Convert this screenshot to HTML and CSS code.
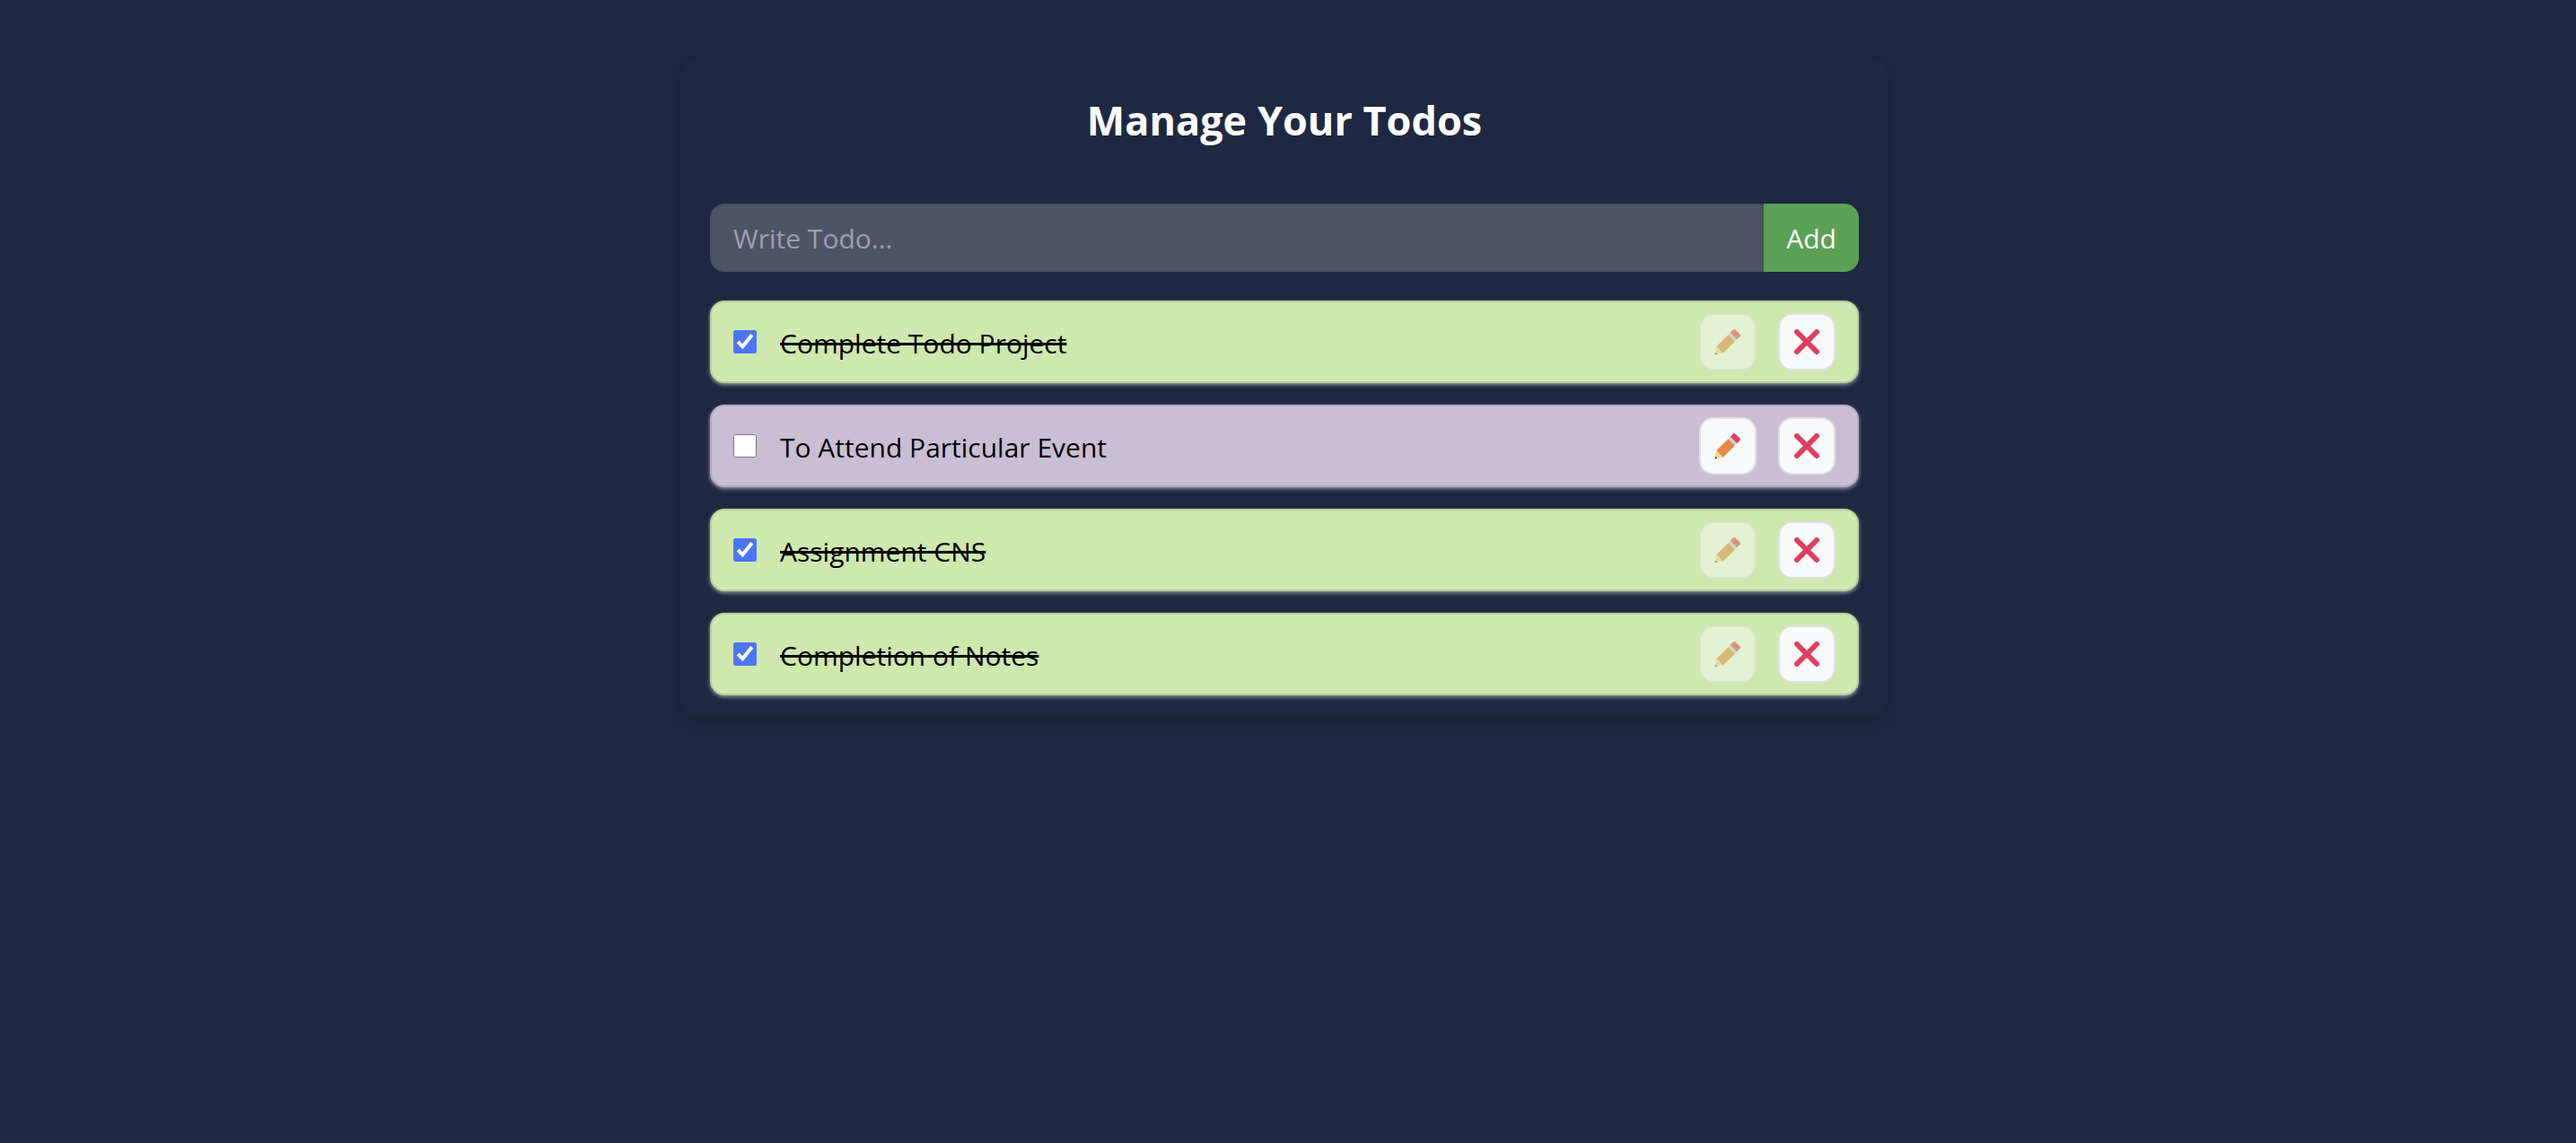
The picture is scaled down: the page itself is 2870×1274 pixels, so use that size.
FILE: index.html
```html
<!DOCTYPE html>
<html lang="en">
<head>
<meta charset="utf-8">
<meta name="viewport" content="width=device-width, initial-scale=1">
<title>Manage Your Todos</title>
<link rel="stylesheet" href="styles.css">
</head>
<body>
<svg class="sprite" aria-hidden="true">
  <symbol id="pencil" viewBox="2 0 34 34">
    <g transform="rotate(45 18 18)">
      <path fill="#dd4160" d="M14 -1 h8 a2 2 0 0 1 2 2 v6 h-12 v-6 a2 2 0 0 1 2 -2z"/>
      <path fill="#ccd0d5" d="M12 6h12v4H12z"/>
      <path fill="#e58a45" d="M12 10h12v21H12z"/>
      <path fill="#f8d58c" d="M12 31h12l-4.500 7h-3z"/>
      <path fill="#333" d="M16.500 37h3l-1.500 3z"/>
    </g>
  </symbol>
  <symbol id="cross" viewBox="0 0 28 28">
    <path d="M3 3L25 25M25 3L3 25" fill="none" stroke="#dd4160" stroke-width="6" stroke-linecap="round"/>
  </symbol>
</svg>
<main class="page">
  <section class="panel">
    <h1 class="title">Manage Your Todos</h1>
    <form class="todo-form">
      <input class="todo-input" type="text" placeholder="Write Todo..." aria-label="New todo">
      <button class="add-button" type="submit">Add</button>
    </form>
    <ul class="todo-list">
      <li class="todo done">
        <input class="check" type="checkbox" id="todo-1" checked>
        <label class="label" for="todo-1">Complete Todo Project</label>
        <button class="action" type="button" aria-label="Edit" disabled><svg class="icon icon-pencil"><use href="#pencil"/></svg></button>
        <button class="action" type="button" aria-label="Delete"><svg class="icon"><use href="#cross"/></svg></button>
      </li>
      <li class="todo">
        <input class="check" type="checkbox" id="todo-2">
        <label class="label" for="todo-2">To Attend Particular Event</label>
        <button class="action" type="button" aria-label="Edit"><svg class="icon icon-pencil"><use href="#pencil"/></svg></button>
        <button class="action" type="button" aria-label="Delete"><svg class="icon"><use href="#cross"/></svg></button>
      </li>
      <li class="todo done">
        <input class="check" type="checkbox" id="todo-3" checked>
        <label class="label" for="todo-3">Assignment CNS</label>
        <button class="action" type="button" aria-label="Edit" disabled><svg class="icon icon-pencil"><use href="#pencil"/></svg></button>
        <button class="action" type="button" aria-label="Delete"><svg class="icon"><use href="#cross"/></svg></button>
      </li>
      <li class="todo done">
        <input class="check" type="checkbox" id="todo-4" checked>
        <label class="label" for="todo-4">Completion of Notes</label>
        <button class="action" type="button" aria-label="Edit" disabled><svg class="icon icon-pencil"><use href="#pencil"/></svg></button>
        <button class="action" type="button" aria-label="Delete"><svg class="icon"><use href="#cross"/></svg></button>
      </li>
    </ul>
  </section>
</main>
</body>
</html>
```
FILE: styles.css
```css
*,
*::before,
*::after {
  box-sizing: border-box;
}

body {
  margin: 0;
  min-height: 100vh;
  background: #1f2841;
  color: #000;
  font: 30px/48px "Open Sans", "Noto Sans", sans-serif;
}

button,
input {
  margin: 0;
  font: inherit;
}

.sprite {
  position: absolute;
  width: 0;
  height: 0;
}

.page {
  padding: 64px 8px 64px 0;
}

.panel {
  max-width: 1344px;
  margin: 0 auto;
  padding: 32px 32px 24px;
  border-radius: 16px;
  box-shadow: 0 8px 12px -2px rgba(27, 36, 51, 0.6), 0 4px 8px -4px rgba(27, 36, 51, 0.6);
}

.title {
  margin: 0 0 56px;
  color: #fff;
  font-size: 45px;
  line-height: 75px;
  font-weight: 700;
  text-align: center;
}

.todo-form {
  display: flex;
  height: 76px;
  margin-bottom: 32px;
}

.todo-input {
  flex: 1;
  min-width: 0;
  padding: 2px 24px 0;
  border: 2px solid #464e5f;
  border-radius: 16px 0 0 16px;
  background: #4c5466;
  color: #fff;
}

.todo-input::placeholder {
  color: #9ca1ac;
  opacity: 1;
}

.add-button {
  min-width: 106px;
  padding: 2px 24px 0;
  border: 0;
  border-radius: 0 16px 16px 0;
  background: #5aa156;
  color: #fff;
}

.todo-list {
  display: grid;
  gap: 24px;
  margin: 0;
  padding: 0;
  list-style: none;
}

.todo {
  display: flex;
  align-items: center;
  gap: 24px;
  padding: 12px 24px;
  border: 2px solid #b5abc2;
  border-radius: 16px;
  background: #c9bfd4;
  box-shadow: 0 2px 4px rgba(255, 255, 255, 0.5);
}

.todo.done {
  border-color: #b9d09c;
  background: #cee8ae;
}

.check {
  width: 26px;
  height: 26px;
  accent-color: #4c75f6;
}

.label {
  flex: 1;
  padding: 3px 0 0 2px;
}

.done .label {
  text-decoration: line-through;
  text-decoration-thickness: 3px;
}

.action {
  display: grid;
  place-items: center;
  width: 64px;
  height: 64px;
  padding: 0;
  border: 2px solid #e0e1e4;
  border-radius: 16px;
  background: #f9fafc;
}

.action:disabled {
  opacity: 0.5;
}

.icon {
  width: 28px;
  height: 28px;
}

.icon-pencil {
  width: 30px;
  height: 30px;
}
```
